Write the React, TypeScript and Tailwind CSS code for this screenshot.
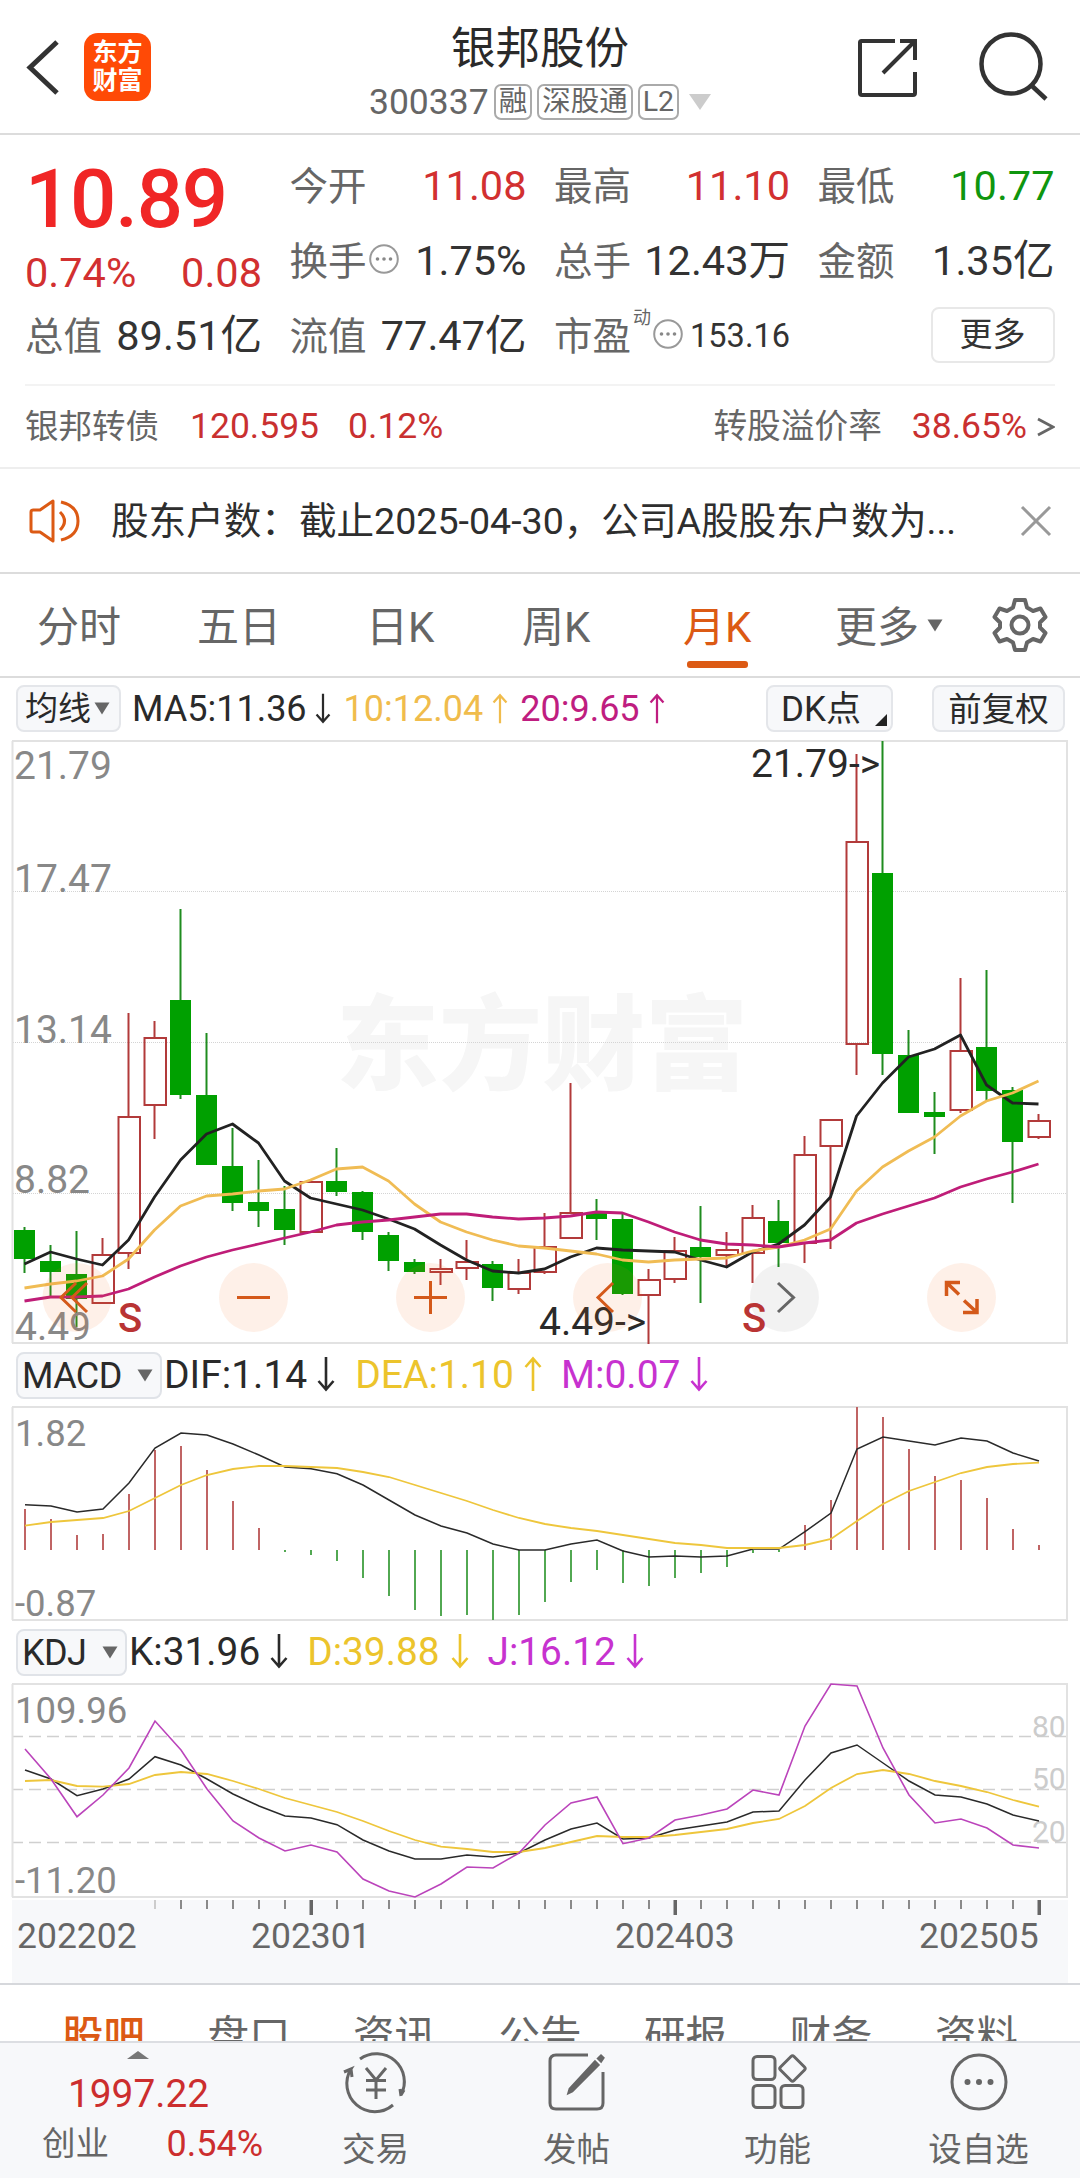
import type { ReactNode } from 'react';

type Candle = [up: number, high: number, top: number, bottom: number, low: number];

// [up, high, top, bottom, low] as vertical chart positions
const candles: Candle[] = [
  [0, 1227, 1230, 1259, 1273], [0, 1245, 1261, 1272, 1297], [0, 1231, 1274, 1299, 1327], [1, 1238, 1255, 1303, 1303],
  [1, 1013, 1117, 1253, 1269], [1, 1021, 1038, 1105, 1139], [0, 909, 1000, 1095, 1099], [0, 1033, 1095, 1165, 1165],
  [0, 1128, 1166, 1203, 1211], [0, 1160, 1202, 1211, 1227], [0, 1186, 1209, 1230, 1245], [1, 1182, 1182, 1232, 1232],
  [0, 1148, 1181, 1192, 1196], [0, 1191, 1192, 1232, 1240], [0, 1232, 1235, 1261, 1271], [0, 1259, 1262, 1272, 1274],
  [1, 1259, 1269, 1272, 1285], [1, 1240, 1262, 1268, 1280], [0, 1261, 1264, 1288, 1301], [1, 1259, 1273, 1289, 1294],
  [1, 1213, 1247, 1272, 1274], [1, 1083, 1213, 1238, 1238], [0, 1199, 1213, 1219, 1240], [0, 1214, 1219, 1294, 1295],
  [1, 1269, 1280, 1295, 1344], [1, 1237, 1251, 1279, 1283], [0, 1206, 1247, 1257, 1303], [1, 1232, 1250, 1255, 1268],
  [1, 1205, 1218, 1253, 1283], [0, 1200, 1221, 1243, 1267], [1, 1136, 1155, 1243, 1263], [1, 1120, 1120, 1146, 1249],
  [1, 754, 842, 1044, 1075], [0, 741, 873, 1054, 1075], [0, 1030, 1055, 1113, 1113], [0, 1092, 1112, 1117, 1154],
  [1, 978, 1051, 1110, 1113], [0, 970, 1047, 1091, 1102], [0, 1087, 1090, 1142, 1203], [1, 1114, 1121, 1137, 1139],
];

const ma5 = [1264, 1252, 1259, 1265, 1240, 1197, 1160, 1134, 1124, 1143, 1181, 1198, 1204, 1210, 1219, 1229, 1245, 1260, 1271, 1273, 1269, 1257, 1248, 1250, 1251, 1252, 1260, 1267, 1252, 1244, 1225, 1197, 1116, 1083, 1057, 1049, 1035, 1085, 1103, 1104];
const ma10 = [1288, 1284, 1281, 1276, 1259, 1230, 1206, 1196, 1194, 1191, 1189, 1180, 1169, 1167, 1181, 1204, 1222, 1232, 1240, 1246, 1248, 1251, 1254, 1260, 1262, 1260, 1259, 1258, 1251, 1247, 1240, 1229, 1191, 1167, 1151, 1137, 1116, 1101, 1093, 1081];
const ma20 = [1301, 1297, 1297, 1296, 1289, 1277, 1266, 1257, 1250, 1244, 1238, 1232, 1225, 1222, 1220, 1217, 1214, 1214, 1217, 1219, 1218, 1216, 1212, 1213, 1222, 1232, 1240, 1244, 1245, 1247, 1243, 1240, 1223, 1214, 1206, 1198, 1187, 1179, 1172, 1164];

const macdBars = [1509, 1519, 1535, 1534, 1494, 1450, 1446, 1470, 1501, 1528, 1552, 1555, 1561, 1578, 1596, 1610, 1616, 1615, 1620, 1615, 1602, 1582, 1570, 1583, 1586, 1578, 1573, 1567, 1553, 1552, 1525, 1500, 1407, 1417, 1449, 1476, 1480, 1498, 1529, 1545];
const dif = [1504.7, 1506, 1512, 1509, 1483, 1448, 1433, 1435, 1444, 1455, 1467, 1468.7, 1473.7, 1485, 1500, 1515, 1526, 1533, 1544, 1550, 1550, 1544, 1540, 1551, 1557, 1556, 1557, 1556, 1549, 1549, 1531.7, 1513, 1449, 1437, 1441, 1445, 1438, 1441, 1453, 1461];
const dea = [1525.7, 1522, 1520, 1518, 1511, 1498, 1485, 1475, 1469, 1466, 1466, 1467, 1468, 1472, 1477, 1485, 1493, 1501, 1510, 1518, 1524, 1528, 1531, 1535, 1539, 1543, 1545, 1548, 1548, 1548, 1545, 1539, 1521, 1504, 1491, 1482, 1473, 1467, 1464, 1462.7];

const kLine = [1770, 1779, 1795.7, 1789, 1779, 1756.7, 1765, 1779, 1794, 1806, 1816, 1818, 1824.7, 1840, 1851, 1859, 1859, 1855, 1857, 1853, 1840, 1829, 1823, 1839, 1838, 1830, 1826, 1822, 1812, 1811, 1780, 1753, 1745, 1763, 1781, 1795, 1797, 1804, 1815, 1821];
const dLine = [1781, 1780, 1786, 1786.7, 1784, 1775, 1772, 1774, 1781, 1789, 1798, 1805, 1812, 1821, 1831, 1840, 1846.7, 1849, 1852, 1852, 1848, 1842, 1836, 1837, 1837, 1835, 1832, 1829, 1823, 1819, 1806, 1788, 1774, 1770, 1774, 1781, 1786, 1792, 1800, 1806.7];
const jLine = [1749, 1779, 1816.7, 1795, 1768, 1721, 1750, 1789, 1821, 1838, 1851, 1845, 1852, 1879, 1891, 1897, 1884, 1867, 1868, 1853, 1825, 1803, 1797, 1843.7, 1838, 1820, 1815, 1809, 1790, 1795, 1726, 1684, 1686, 1748, 1795, 1823, 1819, 1828, 1845, 1848];

const xAt = (i: number) => 24.5 + i * 26;
const toPoints = (ys: number[], dx = 0) => ys.map((y, i) => `${xAt(i) + dx},${y}`).join(' ');

const Arrow = ({ up = false, className = '' }: { up?: boolean; className?: string }) => (
  <svg width="18" height="36" viewBox="0 0 18 36" fill="none" stroke="currentColor" strokeWidth="2.6" className={`shrink-0 ${className}`}>
    {up ? <path d="M9 35V2M1.5 11L9 2.5L16.5 11" /> : <path d="M9 1V34M1.5 25L9 33.5L16.5 25" />}
  </svg>
);

const Dots = ({ className = '' }: { className?: string }) => (
  <svg width="30" height="30" viewBox="0 0 30 30" className={`shrink-0 ${className}`}>
    <circle cx="15" cy="15" r="13.8" fill="none" stroke="#999" strokeWidth="2" />
    <circle cx="8.5" cy="15" r="1.8" fill="#888" />
    <circle cx="15" cy="15" r="1.8" fill="#888" />
    <circle cx="21.5" cy="15" r="1.8" fill="#888" />
  </svg>
);

const Caret = ({ className = '' }: { className?: string }) => (
  <svg width="16" height="13" viewBox="0 0 16 13" className={`shrink-0 ${className}`}>
    <path d="M0.5 0.5H15.5L8 12.5Z" fill="#666" />
  </svg>
);

const Tag = ({ children }: { children: ReactNode }) => (
  <span className="flex h-9 items-center rounded-[7px] border-2 border-[#aaa] px-[3px] text-[28.5px] leading-none whitespace-nowrap">{children}</span>
);

const Stat = ({ label, value, color = 'text-[#333]', children }: { label: string; value: string; color?: string; children?: ReactNode }) => (
  <div className="flex h-[75px] items-center whitespace-nowrap">
    <span className="text-[38.5px] text-[#666]">{label}</span>
    {children}
    <span className={`ml-auto text-[41.5px] ${color}`}>{value}</span>
  </div>
);

const Header = () => (
  <header className="flex h-[135px] shrink-0 items-start border-b-2 border-[#dcdcdc]">
    <svg width="34" height="60" viewBox="0 0 34 60" className="mt-[38px] ml-[26px]">
      <path d="M31 4L4 29.5L31 55" fill="none" stroke="#333" strokeWidth="5" />
    </svg>
    <div className="mt-[33px] ml-6 flex h-[68px] w-[67px] flex-col items-center justify-center rounded-[14px] bg-[#ff4a06] text-[25px] leading-[28px] font-bold text-white">
      <span>东方</span>
      <span>财富</span>
    </div>
    <div className="ml-[219px] flex w-[340px] flex-col items-center">
      <h1 className="mt-[23px] text-[44.5px] leading-[52px] text-[#2a2a2a]">银邦股份</h1>
      <div className="mt-[9px] flex h-9 items-center gap-[5px] text-[#666]">
        <span className="text-[35.5px] leading-9">300337</span>
        <Tag>融</Tag>
        <Tag>深股通</Tag>
        <Tag>L2</Tag>
        <svg width="22" height="16" viewBox="0 0 22 16" className="ml-[5px]">
          <path d="M0 0H22L11 16Z" fill="#ccc" />
        </svg>
      </div>
    </div>
    <svg width="64" height="64" viewBox="0 0 64 64" className="mt-9 ml-[145px]" fill="none" stroke="#333" strokeWidth="4">
      <path d="M40 5H6.5Q5 5 5 6.5V57Q5 59 7 59H58Q60 59 60 57V36M45 5H60V24M60 5L28 37" />
    </svg>
    <svg width="76" height="76" viewBox="0 0 76 76" className="mt-[28px] ml-[56px]" fill="none" stroke="#333" strokeWidth="4.5">
      <circle cx="36" cy="36" r="29.5" />
      <path d="M56 57L71 71" />
    </svg>
  </header>
);

const Quote = () => (
  <section className="h-[249px] shrink-0 pt-[14px] pl-[25px]">
    <div className="grid grid-cols-[237px_237px_236px_237px] gap-x-[27.5px]">
      <div className="row-span-2 flex h-[150px] flex-col">
        <span className="mt-[6px] text-[81.5px] leading-[88px] font-medium tracking-[-1.2px] text-[#f02626]">10.89</span>
        <div className="mt-[4px] flex justify-between text-[41.5px] leading-[52px] text-[#d23030]">
          <span>0.74%</span>
          <span>0.08</span>
        </div>
      </div>
      <Stat label="今开" value="11.08" color="text-[#d23030]" />
      <Stat label="最高" value="11.10" color="text-[#d23030]" />
      <Stat label="最低" value="10.77" color="text-[#0f960f]" />
      <Stat label="换手" value="1.75%">
        <Dots className="ml-[2px] mb-[6px]" />
      </Stat>
      <Stat label="总手" value="12.43万" />
      <Stat label="金额" value="1.35亿" />
      <Stat label="总值" value="89.51亿" />
      <Stat label="流值" value="77.47亿" />
      <div className="flex h-[75px] items-center">
        <span className="text-[38.5px] text-[#666]">市盈</span>
        <span className="mb-[38px] ml-[2px] text-[18px] text-[#666]">动</span>
        <Dots className="ml-[2px] mb-[6px]" />
        <span className="ml-auto text-[32.5px] text-[#333]">153.16</span>
      </div>
      <div className="flex h-[75px] items-center justify-end">
        <button className="mb-[4px] h-[56px] w-[124px] rounded-[8px] border-2 border-[#e8e8e8] text-[33px] leading-[50px] text-[#333]">更多</button>
      </div>
    </div>
  </section>
);

const BondRow = () => (
  <section className="flex h-[85px] shrink-0 flex-col border-b-2 border-[#eee] px-[25px]">
    <div className="h-[2px] bg-[#f3f3f3]" />
    <div className="flex flex-1 items-center pt-px text-[35.5px] text-[#c93030]">
      <span className="text-[33.5px] text-[#666]">银邦转债</span>
      <span className="ml-[31px]">120.595</span>
      <span className="ml-[29px]">0.12%</span>
      <span className="ml-auto text-[33.7px] text-[#666]">转股溢价率</span>
      <span className="ml-[30px]">38.65%</span>
      <svg width="18" height="22" viewBox="0 0 18 22" className="ml-[10px]">
        <path d="M1 3L16 11L1 19" fill="none" stroke="#666" strokeWidth="2.8" />
      </svg>
    </div>
  </section>
);

const Notice = () => (
  <section className="flex h-[105px] shrink-0 items-center border-b-2 border-[#dcdcdc] pl-[28px]">
    <svg width="54" height="48" viewBox="0 0 54 48" fill="none" stroke="#dc5a14" strokeWidth="3">
      <path d="M25 4V44L12 35H5Q3 35 3 33V15Q3 13 5 13H12Z" strokeLinejoin="round" />
      <path d="M32 15Q41 24 32 33" />
      <path d="M33 5Q50 9 50 24Q50 39 33 43" />
    </svg>
    <span className="mt-px ml-[29px] text-[37.6px] whitespace-nowrap text-[#2e2e2e]">股东户数：截止2025-04-30，公司A股股东户数为...</span>
    <svg width="32" height="32" viewBox="0 0 32 32" className="mr-[28px] ml-auto" stroke="#999" strokeWidth="3">
      <path d="M2 2L30 30M30 2L2 30" />
    </svg>
  </section>
);

const Tabs = () => (
  <nav className="flex h-[104px] shrink-0 items-center border-b-2 border-[#dcdcdc] pt-[4px] text-[42px] text-[#666]">
    <span className="ml-[37px] w-[160px]">分时</span>
    <span className="w-[169px]">五日</span>
    <span className="w-[156px]">日K</span>
    <span className="w-[161px]">周K</span>
    <span className="relative w-[152px] text-[#dc5a14]">
      月K
      <i className="absolute top-[65px] left-[4px] h-[7px] w-[61px] rounded-[3px] bg-[#dc5a14]" />
    </span>
    <span>更多</span>
    <Caret className="mb-[4px] ml-[8px]" />
    <svg width="56" height="56" viewBox="0 0 56 56" className="mr-[32px] mb-[4px] ml-auto" fill="none" stroke="#666" strokeWidth="4" strokeLinejoin="round">
      <path d="M23 3H33L35 10.5L41 14L48.5 11.5L53.5 20L48 25.5V30.5L53.5 36L48.5 44.5L41 42L35 45.5L33 53H23L21 45.5L15 42L7.5 44.5L2.5 36L8 30.5V25.5L2.5 20L7.5 11.5L15 14L21 10.5Z" />
      <circle cx="28" cy="28" r="8.5" />
    </svg>
  </nav>
);

const MaBar = () => (
  <div className="flex h-[60px] shrink-0 items-start pt-[7px] text-[36px] leading-[48px]">
    <button className="ml-4 flex h-[47px] w-[105px] items-center rounded-[8px] border-2 border-[#e4e6ea] bg-[#f7f8fa] pl-[7px] text-[33px] text-[#2a2a2a]">
      均线
      <Caret className="ml-[3px]" />
    </button>
    <span className="ml-[11px] text-[#2a2a2a]">MA5:11.36</span>
    <Arrow className="mt-[8px] ml-[7px] h-[31px] text-[#2a2a2a]" />
    <span className="ml-[12px] text-[#f0bc4c]">10:12.04</span>
    <Arrow up className="mt-[8px] ml-[8px] h-[31px] text-[#f0bc4c]" />
    <span className="ml-[11px] text-[#bf1d80]">20:9.65</span>
    <Arrow up className="mt-[8px] ml-[8px] h-[31px] text-[#bf1d80]" />
    <button className="relative ml-auto h-[47px] w-[127px] rounded-[8px] border-2 border-[#e4e6ea] bg-[#f7f8fa] pl-[13px] text-left text-[35px] leading-[45px] text-[#2a2a2a]">
      DK点
      <svg width="12" height="12" viewBox="0 0 12 12" className="absolute right-[4px] bottom-[4px]">
        <path d="M12 0V12H0Z" fill="#222" />
      </svg>
    </button>
    <button className="mr-[15px] ml-[39px] h-[47px] w-[133px] rounded-[8px] border-2 border-[#e4e6ea] bg-[#f7f8fa] text-[33.5px] leading-[45px] text-[#2a2a2a]">前复权</button>
  </div>
);

const KChart = () => (
  <svg width="1080" height="608" viewBox="0 738 1080 608" className="shrink-0 overflow-visible" fill="none">
    <g fontSize="103" fontWeight="900" fill="#f6f6f6">
      <text x="336" y="1082">东方财富</text>
    </g>
    {[891.5, 1042.5, 1193.5].map((y) => (
      <path key={y} d={`M13 ${y}H1067`} stroke="#d4d4d4" strokeDasharray="1 1" />
    ))}
    <path d="M12.5 741V1343M1067 741V1343M12 741H1068M12 1343H1068" stroke="#e2e2e2" strokeWidth="2" />

    {candles.map(([up, high, top, bottom, low], i) => {
      const x = xAt(i);
      return up ? (
        <g key={i} stroke="#b23a3a" strokeWidth="2">
          <path d={`M${x} ${high}V${top}M${x} ${bottom}V${low}`} />
          <rect x={x - 10} y={top} width="21.5" height={bottom - top} />
        </g>
      ) : (
        <g key={i}>
          <path d={`M${x} ${high}V${low}`} stroke="#1f8c1f" strokeWidth="2" />
          <rect x={x - 10.5} y={top} width="21" height={bottom - top} fill="#00a000" />
        </g>
      );
    })}
    <g strokeWidth="2.8" strokeLinejoin="round">
      <polyline points={toPoints(ma5)} stroke="#222" />
      <polyline points={toPoints(ma10)} stroke="#f0bc54" />
      <polyline points={toPoints(ma20)} stroke="#bf1d78" />
    </g>

    <g fontSize="39" fill="#888">
      <text x="14" y="779">21.79</text>
      <text x="14" y="892">17.47</text>
      <text x="14" y="1043">13.14</text>
      <text x="14" y="1193">8.82</text>
      <text x="15" y="1340">4.49</text>
    </g>
    <g fontSize="39" fill="#2a2a2a">
      <text x="751" y="777">21.79-&gt;</text>
      <text x="539" y="1335">4.49-&gt;</text>
    </g>

    <g fill="#f26a21" fillOpacity="0.1">
      {[77, 253.5, 430.5, 607.5, 961.5].map((cx) => (
        <circle key={cx} cx={cx} cy="1297.5" r="34.5" />
      ))}
      <circle cx="784.5" cy="1297.5" r="34.5" fill="#000" fillOpacity="0.05" />
    </g>
    <g stroke="#d4591a" strokeWidth="3">
      <path d="M76 1283L61 1297.5L76 1312M87 1283L72 1297.5L87 1312" />
      <path d="M237 1297.5H270" />
      <path d="M414 1297.5H447M430.5 1281V1314" />
      <path d="M613 1283L598 1297.5L613 1312" />
      <path d="M778 1283L793.5 1297.5L778 1312" stroke="#666" />
      <path d="M946.5 1296V1282.5H960M947 1283L959 1294.5M977 1299V1312.5H963M976.5 1312L964 1300.5" strokeWidth="3.5" />
    </g>
    <g fontSize="40" fontWeight="500" fill="#b93434">
      <text x="118" y="1331.5">S</text>
      <text x="742" y="1331.5">S</text>
    </g>
  </svg>
);

const IndicatorButton = ({ name, width }: { name: string; width: string }) => (
  <button className={`ml-[16px] flex h-[47px] items-center justify-between rounded-[8px] border-2 border-[#e0e3e8] bg-[#f7f8fa] pr-[7px] pl-[4px] text-[36px] tracking-[-0.6px] text-[#2a2a2a] ${width}`}>
    {name}
    <Caret />
  </button>
);

const MacdPanel = () => (
  <section className="flex shrink-0 flex-col">
    <div className="flex h-[58px] items-start pt-[6px] text-[39px] leading-[46px] whitespace-nowrap">
      <IndicatorButton name="MACD" width="w-[146px]" />
      <span className="ml-[2px] text-[#2a2a2a]">DIF:1.14</span>
      <Arrow className="mt-[4px] ml-[10px] text-[#2a2a2a]" />
      <span className="ml-[20px] text-[#ecc42c]">DEA:1.10</span>
      <Arrow up className="mt-[4px] ml-[10px] text-[#ecc42c]" />
      <span className="ml-[19px] text-[#c732cf]">M:0.07</span>
      <Arrow className="mt-[4px] ml-[10px] text-[#c732cf]" />
    </div>
    <svg width="1080" height="219" viewBox="0 1404 1080 219" className="overflow-visible" fill="none">
      <path d="M12.5 1407V1620M1067 1407V1620M12 1407H1068M12 1620H1068" stroke="#e2e2e2" strokeWidth="2" />
      <g strokeWidth="2">
        {macdBars.map((y, i) => (
          <path key={i} d={`M${xAt(i) + 0.5} 1550V${y}`} stroke={y < 1550 ? '#c06464' : '#52a852'} />
        ))}
      </g>
      <polyline points={toPoints(dif, 0.5)} stroke="#2a2a2a" strokeWidth="1.5" />
      <polyline points={toPoints(dea, 0.5)} stroke="#eec63c" strokeWidth="1.8" />
      <g fontSize="36.5" fill="#888">
        <text x="15" y="1446">1.82</text>
        <text x="15" y="1616">-0.87</text>
      </g>
    </svg>
  </section>
);

const KdjPanel = () => (
  <section className="flex shrink-0 flex-col">
    <div className="flex h-[58px] items-start pt-[6px] text-[38.8px] leading-[46px] whitespace-nowrap">
      <IndicatorButton name="KDJ" width="w-[111px]" />
      <span className="ml-[2px] text-[#2a2a2a]">K:31.96</span>
      <Arrow className="mt-[4px] ml-[10px] text-[#2a2a2a]" />
      <span className="ml-[19px] text-[#ecc42c]">D:39.88</span>
      <Arrow className="mt-[4px] ml-[11px] text-[#ecc42c]" />
      <span className="ml-[19px] text-[#c732cf]">J:16.12</span>
      <Arrow className="mt-[4px] ml-[10px] text-[#c732cf]" />
    </div>
    <svg width="1080" height="219" viewBox="0 1681 1080 219" className="overflow-visible" fill="none">
      {[1736.5, 1789.5, 1842.5].map((y) => (
        <path key={y} d={`M13 ${y}H1067`} stroke="#d0d0d0" strokeWidth="1.3" strokeDasharray="12 6" strokeDashoffset="2" />
      ))}
      <path d="M12.5 1684V1897M1067 1684V1897M12 1684H1068M12 1897H1068" stroke="#e2e2e2" strokeWidth="2" />
      <g fontSize="30" fill="#ccc">
        <text x="1032" y="1737">80</text>
        <text x="1032" y="1789">50</text>
        <text x="1032" y="1842">20</text>
      </g>
      <polyline points={toPoints(kLine, 0.5)} stroke="#2a2a2a" strokeWidth="1.5" />
      <polyline points={toPoints(dLine, 0.5)} stroke="#eec63c" strokeWidth="1.8" />
      <polyline points={toPoints(jLine, 0.5)} stroke="#bb44bb" strokeWidth="1.6" />
      <g fontSize="36.5" fill="#888">
        <text x="15" y="1723">109.96</text>
        <text x="15" y="1893">-11.20</text>
      </g>
    </svg>
  </section>
);

const TimeAxis = () => (
  <div className="shrink-0 border-b-2 border-[#d6d8dc]">
    <svg width="1080" height="83" viewBox="0 1900 1080 83">
      <rect x="12" y="1900" width="1056" height="83" fill="#f7f8fa" />
      {candles.map((_, i) => {
        if (i < 5) return null;
        const major = i === 11 || i === 25 || i === 39;
        return (
          <rect key={i} x={xAt(i) + 0.5 - (major ? 1.5 : 1)} y="1900" width={major ? 3.5 : 2} height={major ? 15 : 9} fill={i === 5 ? '#ccc' : major ? '#666' : '#8a8a8a'} />
        );
      })}
      <g fontSize="35.5" fill="#666">
        <text x="17" y="1948">202202</text>
        <text x="251" y="1948">202301</text>
        <text x="615" y="1948">202403</text>
        <text x="919" y="1948">202505</text>
      </g>
    </svg>
  </div>
);

const sectionTabs = ['股吧', '盘口', '资讯', '公告', '研报', '财务', '资料'];

const SectionTabs = () => (
  <nav className="flex h-[56px] shrink-0 gap-[62.5px] overflow-hidden pt-[22px] pl-[62px] text-[41.5px] leading-[60px] whitespace-nowrap text-[#666]">
    {sectionTabs.map((t, i) => (
      <span key={t} className={i === 0 ? 'w-[83px] font-medium text-[#dc5a14]' : 'w-[83px]'}>{t}</span>
    ))}
  </nav>
);

const BottomItem = ({ label, children }: { label: string; children: ReactNode }) => (
  <div className="flex w-[201px] flex-col items-center">
    <svg width="66" height="64" viewBox="0 0 66 64" className="mt-[7px]" fill="none" stroke="#666" strokeWidth="3">
      {children}
    </svg>
    <span className="mt-[12px] text-[33.5px] leading-[48px] text-[#666]">{label}</span>
  </div>
);

const BottomBar = () => (
  <footer className="flex min-h-0 flex-1 border-t-2 border-[#dcdee2] bg-[#f7f8fa]">
    <div className="relative w-[275px] text-[#cc2e2e]">
      <svg width="22" height="8" viewBox="0 0 22 8" className="absolute top-[8px] left-[127px]">
        <path d="M0 8L11 0L22 8Z" fill="#777" />
      </svg>
      <div className="mt-[25px] pl-[68px] text-[38.8px] leading-[52px]">1997.22</div>
      <div className="flex h-12 items-center justify-between pr-[12px] pl-[42px] text-[36px]">
        <span className="text-[33.5px] text-[#666]">创业</span>
        <span>0.54%</span>
      </div>
    </div>
    <BottomItem label="交易">
      <path d="M17 9A28 28 0 0 1 58 45L61 40M58 46L57 39M50 55A28 28 0 0 1 8 19L1 22M8 19L9 27" />
      <path d="M23 18L33 30L43 18M33 30V49M23 30.5H43M23 40H43" />
    </BottomItem>
    <BottomItem label="发帖">
      <path d="M44 5H12Q6 5 6 11V53Q6 59 12 59H53Q59 59 59 53V22" />
      <path d="M54 15L28 41L25 42.5L26 39L51 12ZM54.5 8.5L57 6L59 8L57 11Z" fill="#666" />
    </BottomItem>
    <BottomItem label="功能">
      <rect x="8" y="6.5" width="22" height="23" rx="4" />
      <rect x="8" y="35.5" width="22" height="22" rx="4" />
      <rect x="36" y="35.5" width="22" height="22" rx="4" />
      <path d="M46 6.5Q47.5 5 49 6.5L59.5 17Q61 18.5 59.5 20L49 30.5Q47.5 32 46 30.5L35.5 20Q34 18.5 35.5 17Z" />
    </BottomItem>
    <BottomItem label="设自选">
      <circle cx="33" cy="32" r="27" />
      <g fill="#666" stroke="none">
        <circle cx="21.5" cy="32" r="3" />
        <circle cx="33" cy="32" r="3" />
        <circle cx="44.5" cy="32" r="3" />
      </g>
    </BottomItem>
  </footer>
);

const App = () => (
  <div className="flex h-[2178px] w-[1080px] flex-col overflow-hidden bg-white font-['Roboto','Noto_Sans_CJK_SC',sans-serif]">
    <Header />
    <Quote />
    <BondRow />
    <Notice />
    <Tabs />
    <MaBar />
    <KChart />
    <MacdPanel />
    <KdjPanel />
    <TimeAxis />
    <SectionTabs />
    <BottomBar />
  </div>
);

export default App;
